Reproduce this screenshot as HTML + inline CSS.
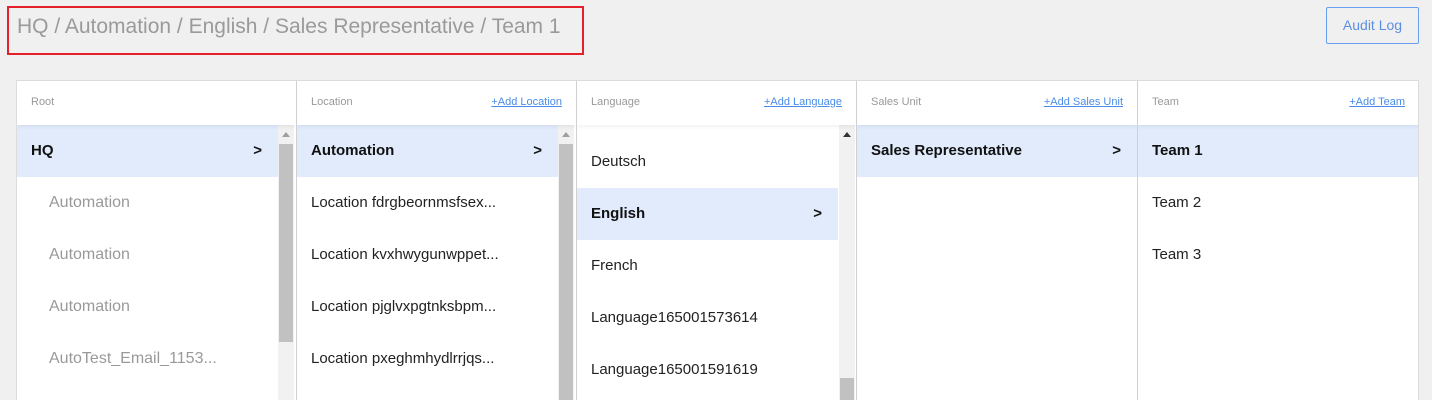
<!DOCTYPE html>
<html><head><style>
*{box-sizing:border-box;margin:0;padding:0}
html,body{width:1432px;height:400px;overflow:hidden}
body{background:#f0f0f0;font-family:"Liberation Sans",sans-serif;position:relative}
.bc{position:absolute;left:7px;top:6px;width:577px;height:49px;border:2px solid #e5202a;color:#9a9a9a;font-size:21px;padding:7px 0 0 8px;white-space:nowrap}
.btn{position:absolute;left:1326px;top:7px;width:93px;height:37px;border:1px solid #6a9ff0;border-radius:2px;color:#5d8fe0;font-size:14px;text-align:center;line-height:35px}
.panel{position:absolute;left:16px;top:80px;width:1403px;height:320px;background:#fff;border:1px solid #dcdcdc;border-bottom:none;overflow:hidden}
.col{position:absolute;top:0;height:320px;overflow:hidden;border-right:1px solid #d0d0d0}
.hd{height:44px;font-size:11px;color:#999;padding:15px 14px 0 14px;position:relative;box-shadow:0 2px 4px rgba(0,0,0,.06);z-index:2;background:#fff}
.hd a{position:absolute;right:14px;top:15px;color:#4a8de8;text-decoration:underline}
.row{position:absolute;left:0;height:52px;font-size:15px;color:#222;padding-left:14px;line-height:52px;white-space:nowrap}
.row.sel{background:#e1ebfb;font-weight:bold;color:#111}
.row.g{color:#999;padding-left:32px;font-size:16px}
.ch{position:absolute;right:16px;top:0;font-weight:bold;font-size:15px}
.sb{position:absolute;top:44px;width:16px;bottom:0;background:#f1f1f1}
.sb .up{position:absolute;left:4px;top:7px;width:0;height:0;border-left:4px solid transparent;border-right:4px solid transparent;border-bottom:5px solid #a0a0a0}
.sb .th{position:absolute;left:1px;width:14px;background:#c1c1c1}
</style></head><body>
<div class="bc">HQ / Automation / English / Sales Representative / Team 1</div>
<div class="btn">Audit Log</div>
<div class="panel">
 <div class="col" style="left:0;width:280px">
  <div class="hd">Root</div>
  <div class="row sel" style="top:44px;width:261px">HQ<span class="ch">&gt;</span></div>
  <div class="row g" style="top:96px">Automation</div>
  <div class="row g" style="top:148px">Automation</div>
  <div class="row g" style="top:200px">Automation</div>
  <div class="row g" style="top:252px">AutoTest_Email_1153...</div>
  <div class="sb" style="left:261px"><div class="up"></div><div class="th" style="top:19px;height:198px"></div></div>
 </div>
 <div class="col" style="left:280px;width:280px">
  <div class="hd">Location<a>+Add Location</a></div>
  <div class="row sel" style="top:44px;width:261px">Automation<span class="ch">&gt;</span></div>
  <div class="row" style="top:96px">Location fdrgbeornmsfsex...</div>
  <div class="row" style="top:148px">Location kvxhwygunwppet...</div>
  <div class="row" style="top:200px">Location pjglvxpgtnksbpm...</div>
  <div class="row" style="top:252px">Location pxeghmhydlrrjqs...</div>
  <div class="sb" style="left:261px"><div class="up"></div><div class="th" style="top:19px;height:300px"></div></div>
 </div>
 <div class="col" style="left:560px;width:280px">
  <div class="hd">Language<a>+Add Language</a></div>
  <div class="row" style="top:55px">Deutsch</div>
  <div class="row sel" style="top:107px;width:261px">English<span class="ch">&gt;</span></div>
  <div class="row" style="top:159px">French</div>
  <div class="row" style="top:211px">Language165001573614</div>
  <div class="row" style="top:263px">Language165001591619</div>
  <div class="sb" style="left:262px"><div class="up" style="border-bottom-color:#333"></div><div class="th" style="top:253px;height:80px"></div></div>
 </div>
 <div class="col" style="left:840px;width:281px">
  <div class="hd">Sales Unit<a>+Add Sales Unit</a></div>
  <div class="row sel" style="top:44px;width:280px">Sales Representative<span class="ch">&gt;</span></div>
 </div>
 <div class="col" style="left:1121px;width:281px;border-right:none">
  <div class="hd">Team<a>+Add Team</a></div>
  <div class="row sel" style="top:44px;width:281px">Team 1</div>
  <div class="row" style="top:96px">Team 2</div>
  <div class="row" style="top:148px">Team 3</div>
 </div>
</div>
</body></html>
